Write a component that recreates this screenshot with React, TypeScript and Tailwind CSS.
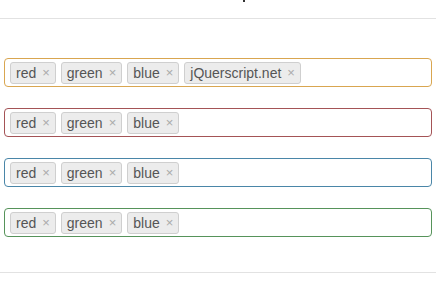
const tagSets: { border: string; tags: string[] }[] = [
  { border: 'border-[#d9a650]', tags: ['red', 'green', 'blue', 'jQuerscript.net'] },
  { border: 'border-[#a45356]', tags: ['red', 'green', 'blue'] },
  { border: 'border-[#4a86a8]', tags: ['red', 'green', 'blue'] },
  { border: 'border-[#56935a]', tags: ['red', 'green', 'blue'] },
];

const Tag = ({ label }: { label: string }) => (
  <span className="flex items-center gap-[6px] h-[22px] px-[5px] rounded-[3px] border border-[#cfcfcf] bg-[#ececec] text-[14px] leading-none text-[#555]">
    {label}
    <span className="text-[13px] text-[#aaa]">×</span>
  </span>
);

const App = () => {
  return (
    <div className="w-[436px] h-[291px] overflow-hidden bg-white font-['Liberation_Sans',Arial,sans-serif]">
      <div className="h-[3px] pl-[243px]">
        <div className="w-[2px] h-[2px] bg-[#333]" />
      </div>
      <div className="mt-[15px] h-px bg-[#e2e2e2]" />
      <div className="px-1 pt-[39px] flex flex-col gap-[21px]">
        {tagSets.map((set, i) => (
          <div
            key={i}
            className={`h-[29px] flex items-center gap-[5px] pl-[5px] rounded-[4px] border ${set.border}`}
          >
            {set.tags.map((t) => (
              <Tag key={t} label={t} />
            ))}
          </div>
        ))}
      </div>
      <div className="mt-[35px] h-px bg-[#e2e2e2]" />
    </div>
  );
};

export default App;
